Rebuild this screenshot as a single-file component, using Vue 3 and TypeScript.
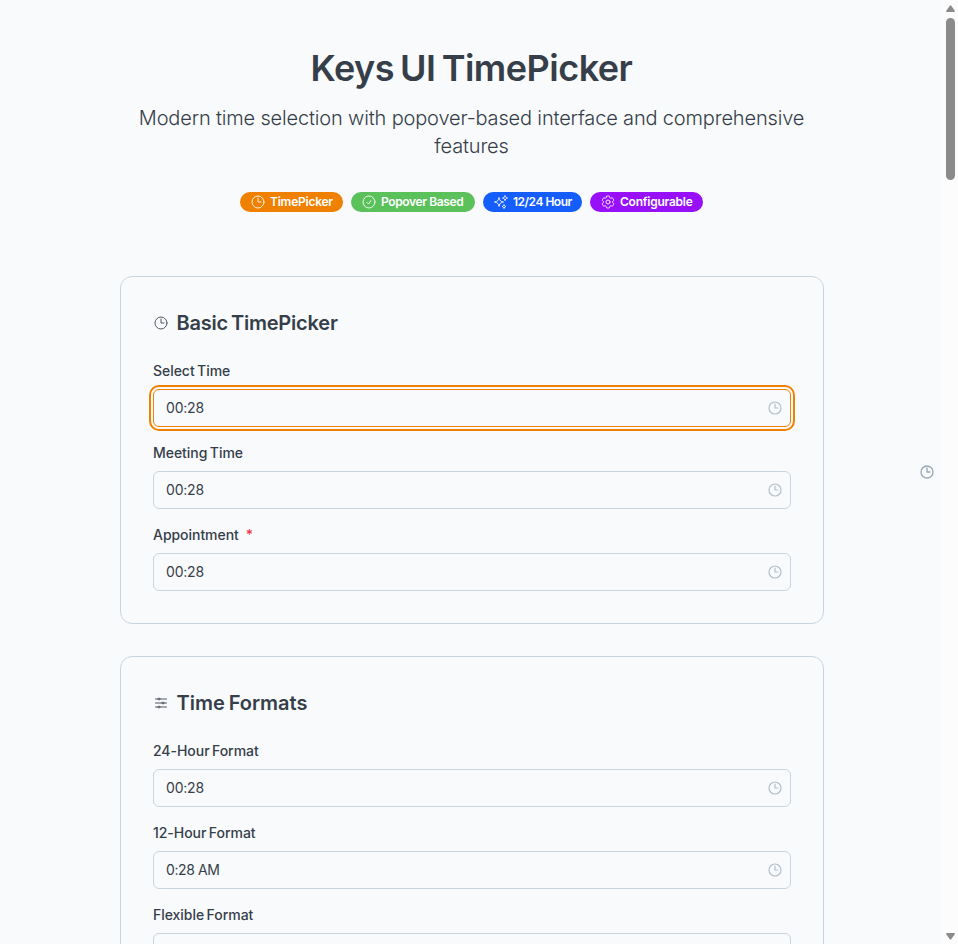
<script setup lang="ts">
type IconName = 'clock' | 'check' | 'sparkles' | 'cog' | 'sliders'

interface Field {
  label: string
  value: string
  required?: boolean
  focused?: boolean
}

const icons: Record<IconName, string[]> = {
  clock: ['M12 6v6h4.5m4.5 0a9 9 0 1 1-18 0 9 9 0 0 1 18 0Z'],
  check: ['M9 12.75 11.25 15 15 9.75M21 12a9 9 0 1 1-18 0 9 9 0 0 1 18 0Z'],
  sparkles: [
    'M9.813 15.904 9 18.75l-.813-2.846a4.5 4.5 0 0 0-3.09-3.09L2.25 12l2.846-.813a4.5 4.5 0 0 0 3.09-3.09L9 5.25l.813 2.846a4.5 4.5 0 0 0 3.09 3.09L15.75 12l-2.846.813a4.5 4.5 0 0 0-3.09 3.09Z',
    'M18.259 8.715 18 9.75l-.259-1.035a3.375 3.375 0 0 0-2.455-2.456L14.25 6l1.036-.259a3.375 3.375 0 0 0 2.455-2.456L18 2.25l.259 1.035a3.375 3.375 0 0 0 2.456 2.456L21.75 6l-1.035.259a3.375 3.375 0 0 0-2.456 2.456Z',
    'M16.894 20.567 16.5 21.75l-.394-1.183a2.25 2.25 0 0 0-1.423-1.423L13.5 18.75l1.183-.394a2.25 2.25 0 0 0 1.423-1.423l.394-1.183.394 1.183a2.25 2.25 0 0 0 1.423 1.423l1.183.394-1.183.394a2.25 2.25 0 0 0-1.423 1.423Z',
  ],
  cog: [
    'M9.594 3.94c.09-.542.56-.94 1.11-.94h2.593c.55 0 1.02.398 1.11.94l.213 1.281c.063.374.313.686.645.87.074.04.147.083.22.127.325.196.72.257 1.075.124l1.217-.456a1.125 1.125 0 0 1 1.37.49l1.296 2.247a1.125 1.125 0 0 1-.26 1.431l-1.003.827c-.293.241-.438.613-.43.992a7.723 7.723 0 0 1 0 .255c-.008.378.137.75.43.991l1.004.827c.424.35.534.955.26 1.43l-1.298 2.247a1.125 1.125 0 0 1-1.369.491l-1.217-.456c-.355-.133-.75-.072-1.076.124a6.47 6.47 0 0 1-.22.128c-.331.183-.581.495-.644.869l-.213 1.281c-.09.543-.56.94-1.11.94h-2.594c-.55 0-1.019-.398-1.11-.94l-.213-1.281c-.062-.374-.312-.686-.644-.87a6.52 6.52 0 0 1-.22-.127c-.325-.196-.72-.257-1.076-.124l-1.217.456a1.125 1.125 0 0 1-1.369-.49l-1.297-2.247a1.125 1.125 0 0 1 .26-1.431l1.004-.827c.292-.24.437-.613.43-.991a6.932 6.932 0 0 1 0-.255c.007-.38-.138-.751-.43-.992l-1.004-.827a1.125 1.125 0 0 1-.26-1.43l1.297-2.247a1.125 1.125 0 0 1 1.37-.491l1.216.456c.356.133.751.072 1.076-.124.072-.044.146-.086.22-.128.332-.183.582-.495.644-.869l.214-1.28Z',
    'M15 12a3 3 0 1 1-6 0 3 3 0 0 1 6 0Z',
  ],
  sliders: [
    'M10.5 6h9.75M10.5 6a1.5 1.5 0 1 1-3 0m3 0a1.5 1.5 0 1 0-3 0M3.75 6H7.5m3 12h9.75m-9.75 0a1.5 1.5 0 0 1-3 0m3 0a1.5 1.5 0 0 0-3 0m-3.75 0H7.5m9-6h3.75m-3.75 0a1.5 1.5 0 0 1-3 0m3 0a1.5 1.5 0 0 0-3 0m-9.75 0h9.75',
  ],
}

const badges: { text: string; tone: string; icon: IconName }[] = [
  { text: 'TimePicker', tone: 'orange', icon: 'clock' },
  { text: 'Popover Based', tone: 'green', icon: 'check' },
  { text: '12/24 Hour', tone: 'blue', icon: 'sparkles' },
  { text: 'Configurable', tone: 'purple', icon: 'cog' },
]

const sections: { title: string; icon: IconName; tone: string; fields: Field[] }[] = [
  {
    title: 'Basic TimePicker',
    icon: 'clock',
    tone: 'basic',
    fields: [
      { label: 'Select Time', value: '00:28', focused: true },
      { label: 'Meeting Time', value: '00:28' },
      { label: 'Appointment', value: '00:28', required: true },
    ],
  },
  {
    title: 'Time Formats',
    icon: 'sliders',
    tone: 'formats',
    fields: [
      { label: '24-Hour Format', value: '00:28' },
      { label: '12-Hour Format', value: '0:28 AM' },
      { label: 'Flexible Format', value: '' },
    ],
  },
]
</script>

<template>
  <div class="window">
    <main class="page">
      <header class="hero">
        <h1>Keys UI TimePicker</h1>
        <p>Modern time selection with popover-based interface and comprehensive features</p>
        <div class="badges">
          <span v-for="b in badges" :key="b.text" class="badge" :class="b.tone">
            <svg class="icon" viewBox="0 0 24 24"><path v-for="d in icons[b.icon]" :key="d" :d="d" /></svg>
            <span class="badge-text">{{ b.text }}</span>
          </span>
        </div>
      </header>
      <section v-for="s in sections" :key="s.title" class="card">
        <h2 :class="s.tone">
          <svg class="icon" viewBox="0 0 24 24"><path v-for="d in icons[s.icon]" :key="d" :d="d" /></svg>
          <span>{{ s.title }}</span>
        </h2>
        <div v-for="f in s.fields" :key="f.label" class="field">
          <div class="label">{{ f.label }}<span v-if="f.required" class="required">*</span></div>
          <div class="input" :class="{ focused: f.focused, meridiem: f.value.endsWith('M') }">
            <span>{{ f.value }}</span>
            <svg class="icon" viewBox="0 0 24 24"><path v-for="d in icons.clock" :key="d" :d="d" /></svg>
          </div>
        </div>
      </section>
      <svg class="icon floating" viewBox="0 0 24 24"><path v-for="d in icons.clock" :key="d" :d="d" /></svg>
    </main>
    <aside class="scrollbar">
      <svg class="arrow" viewBox="0 0 9 7"><path d="M4.5 0.2Q5 0.2 5.4 0.9L8.8 5.7Q9.1 7 8 7H1Q-0.1 7 0.2 5.7L3.6 0.9Q4 0.2 4.5 0.2Z" /></svg>
      <div class="thumb"></div>
      <svg class="arrow down" viewBox="0 0 9 7"><path d="M4.5 0.2Q5 0.2 5.4 0.9L8.8 5.7Q9.1 7 8 7H1Q-0.1 7 0.2 5.7L3.6 0.9Q4 0.2 4.5 0.2Z" /></svg>
    </aside>
  </div>
</template>

<style>
body {
  overflow: hidden;
  background: #f8fafc;
}
</style>

<style scoped>
.window {
  display: flex;
  height: 944px;
  overflow: hidden;
  font-family: Inter, "Liberation Sans", sans-serif;
  color: #363e49;
}
.page {
  position: relative;
  box-sizing: border-box;
  flex: none;
  width: 943px;
  height: 944px;
  padding: 48px 119px 0 120px;
  overflow: hidden;
}
.hero {
  display: flex;
  flex-direction: column;
  align-items: center;
  width: 703px;
  margin-bottom: 64px;
}
h1 {
  margin: 0 0 16px;
  font-size: 36px;
  line-height: 40px;
  font-weight: 600;
  letter-spacing: -0.5px;
  word-spacing: -2.5px;
  white-space: nowrap;
}
p {
  margin: 0 0 32px;
  max-width: 672px;
  font-size: 20px;
  line-height: 28px;
  font-weight: 300;
  text-align: center;
  letter-spacing: -0.16px;
}
.badges {
  display: flex;
  gap: 8px;
}
.badge {
  display: flex;
  align-items: center;
  gap: 4px;
  box-sizing: border-box;
  height: 20px;
  padding: 0 10px;
  border-radius: 10px;
  color: #fff;
  font-size: 12px;
  font-weight: 600;
  line-height: 16px;
  white-space: nowrap;
}
.badge .icon {
  opacity: 0.9;
}
.orange { width: 103px; background: #f08000; letter-spacing: -0.24px; }
.green { width: 124px; background: #5bc15b; letter-spacing: -0.38px; }
.blue { width: 99px; background: #155dfc; letter-spacing: -0.5px; }
.purple { width: 113px; background: #9810fa; letter-spacing: -0.24px; }
.icon {
  flex: none;
  width: 16px;
  height: 16px;
  fill: none;
  stroke: currentColor;
  stroke-width: 1.5;
  stroke-linecap: round;
  stroke-linejoin: round;
}
.card {
  padding: 32px;
  margin-bottom: 32px;
  border: 1px solid #cad5e2;
  border-radius: 12px;
}
h2 {
  display: flex;
  align-items: center;
  gap: 7.5px;
  margin: 0 0 24px;
  font-size: 20px;
  line-height: 28px;
  font-weight: 600;
}
h2 .icon {
  opacity: 0.85;
}
.basic {
  letter-spacing: -0.2px;
  word-spacing: -2px;
}
.formats {
  letter-spacing: -0.02px;
  word-spacing: -1px;
}
.field + .field {
  margin-top: 16px;
}
.label {
  margin-bottom: 8px;
  font-size: 14px;
  line-height: 20px;
  font-weight: 500;
  letter-spacing: -0.04px;
  word-spacing: -1.2px;
}
.required {
  margin-left: 7px;
  color: #e7374a;
}
.input {
  display: flex;
  align-items: center;
  justify-content: space-between;
  box-sizing: border-box;
  height: 38px;
  padding: 0 7px 0 12px;
  border: 1px solid #cad5e2;
  border-radius: 6px;
  font-size: 14px;
  line-height: 20px;
  letter-spacing: -0.2px;
}
.meridiem {
  letter-spacing: -0.4px;
}
.input .icon {
  color: #b4bfcd;
  stroke-width: 1.8;
}
.input.focused {
  border-color: #f08000;
  outline: 2px solid #f08000;
  outline-offset: 2px;
}
.floating {
  position: absolute;
  top: 464px;
  right: 8px;
  color: #99a7bb;
  stroke-width: 2;
}
.scrollbar {
  display: flex;
  flex-direction: column;
  align-items: center;
  box-sizing: border-box;
  width: 15px;
  height: 944px;
  padding: 5px 0 4px;
  background: #fcfcfc;
}
.arrow {
  width: 9px;
  height: 7px;
  fill: #8b8b8b;
}
.thumb {
  width: 9px;
  height: 162px;
  margin-top: 6px;
  border-radius: 5px;
  background: #8b8b8b;
}
.down {
  margin-top: auto;
  transform: rotate(180deg);
}
</style>
